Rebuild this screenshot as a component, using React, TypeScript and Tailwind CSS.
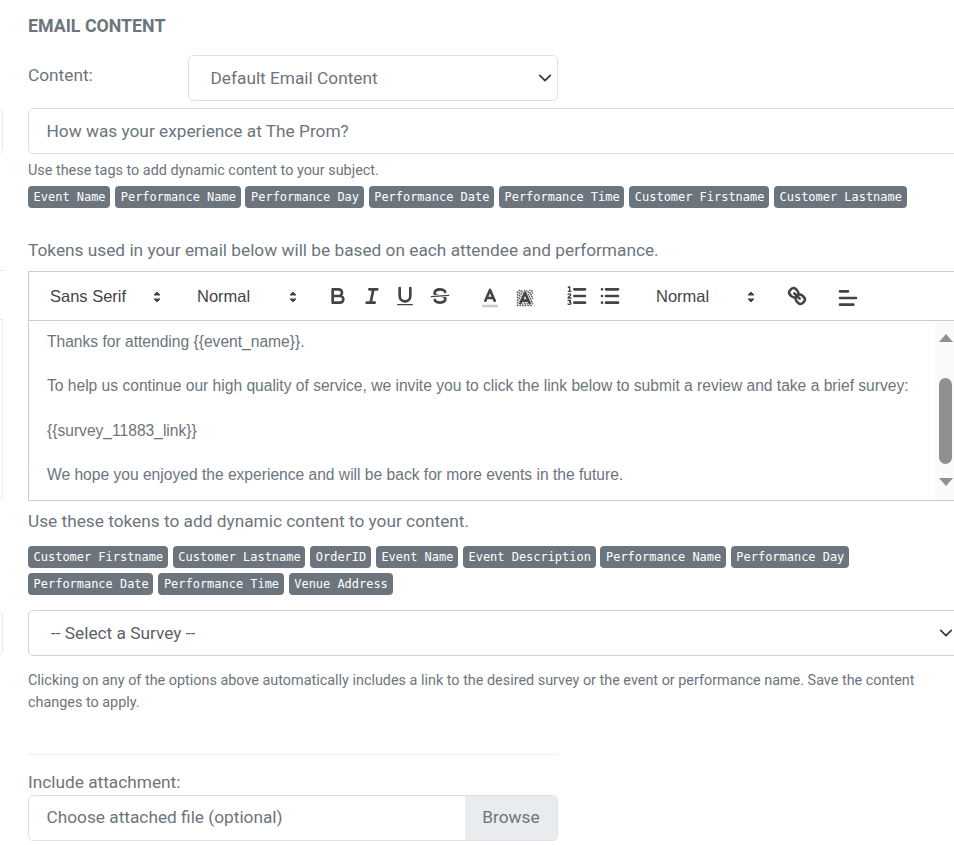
import React from "react";

const subjectTags = ["Event Name", "Performance Name", "Performance Day", "Performance Date", "Performance Time", "Customer Firstname", "Customer Lastname"];
const contentTags = ["Customer Firstname", "Customer Lastname", "OrderID", "Event Name", "Event Description", "Performance Name", "Performance Day", "Performance Date", "Performance Time", "Venue Address"];

function Tag({ label }: { label: string }) {
  return (
    <span className="h-[21.6px] pl-[5.6px] pr-[4.7px] rounded-[4px] bg-[#6c757d] text-white text-[11.96px] leading-[22.6px] whitespace-nowrap font-['DejaVu_Sans_Mono',monospace]">
      {label}
    </span>
  );
}

function Chevron({ className }: { className?: string }) {
  return (
    <svg viewBox="0 0 16 16" className={className} fill="none" stroke="#343a40" strokeWidth="2" strokeLinecap="round" strokeLinejoin="round">
      <path d="M2 5l6 6 6-6" />
    </svg>
  );
}

function Updown() {
  return (
    <svg viewBox="0 0 18 18" className="w-[18px] h-[18px] shrink-0 translate-y-[1px]" fill="#444" stroke="#444" strokeWidth="1" strokeLinejoin="round">
      <path d="M6 7l3-3 3 3z" />
      <path d="M6 11l3 3 3-3z" />
    </svg>
  );
}

function PickerLabel({ label, className }: { label: string; className: string }) {
  return <span className={`text-[16.5px] leading-none text-[#444] font-['Liberation_Sans',sans-serif] ${className}`}>{label}</span>;
}

function ToolIcon({ children, className }: { children: React.ReactNode; className?: string }) {
  return (
    <svg viewBox="0 0 18 18" className={`w-[24px] h-[24px] shrink-0 ${className ?? ""}`} fill="none" stroke="#444" strokeWidth="2" strokeLinecap="round" strokeLinejoin="round">
      {children}
    </svg>
  );
}

export default function App() {
  return (
    <div className="relative w-[954px] h-[845px] overflow-hidden bg-white text-[#6c757d] font-['Roboto',sans-serif]">
      {/* bits of the clipped column on the left */}
      <div className="absolute left-[-10px] top-[108px] w-[13px] h-[46px] border border-[#e6e8eb] rounded-[5px]" />
      <div className="absolute left-0 top-[270px] w-[3px] h-[50px] border-y border-[#e2e2e2]" />
      <div className="absolute left-[-1px] top-[320px] w-[4px] h-[180px] border-r border-b border-[#eeeeee]" />
      <div className="absolute left-[-10px] top-[610px] w-[13px] h-[46px] border border-[#e6e8eb] rounded-[5px]" />

      <div className="w-[1000px] pl-[28px] pt-[16px]">
        <h3 className="text-[17.8px] leading-[20px] font-bold text-[#6c757d]">EMAIL CONTENT</h3>

        <div className="flex mt-[19px] w-[530px]">
          <label className="w-[160px] text-[17.28px] leading-[24px] pt-[8px]">Content:</label>
          <div className="flex-1 h-[46px] border border-[#dee2e6] rounded-[5px] flex items-center justify-between pl-[21.5px] pr-[5px] text-[17.28px]">
            <span className="translate-y-[1px]">Default Email Content</span>
            <Chevron className="w-[14px] h-[14px]" />
          </div>
        </div>

        <div className="mt-[7px] h-[46px] border border-[#dee2e6] rounded-[5px] flex items-center pl-[17.5px] text-[17.28px]">
          <span className="translate-y-[1px]">How was your experience at The Prom?</span>
        </div>

        <p className="mt-[7px] text-[14.4px] leading-[20px]">Use these tags to add dynamic content to your subject.</p>
        <div className="flex gap-[4.9px] mt-[5px]">
          {subjectTags.map(t => <Tag key={t} label={t} />)}
        </div>

        <p className="mt-[30.4px] text-[17.28px] leading-[24px]">Tokens used in your email below will be based on each attendee and performance.</p>

        <div className="mt-[9px] border border-[#ccc] h-[230px] flex flex-col">
          <div className="h-[49px] border-b border-[#ccc] flex items-center shrink-0">
            <PickerLabel label="Sans Serif" className="ml-[21px] w-[97.5px]" />
            <Updown />
            <PickerLabel label="Normal" className="ml-[31.5px] w-[87px]" />
            <Updown />
            <ToolIcon className="ml-[24px]">
              <path d="M5 4h4.500a2.500 2.500 0 010 5H5zM5 9h5.500a2.500 2.500 0 010 5H5z" />
            </ToolIcon>
            <ToolIcon className="ml-[10px]">
              <path d="M7 4h6M5 14h6M8 14l2-10" />
            </ToolIcon>
            <ToolIcon className="ml-[9px]">
              <path d="M5 3v6a4 4 0 004 4 4 4 0 004-4V3" />
              <rect x="3" y="15" width="12" height="1" rx=".5" fill="#444" stroke="none" />
            </ToolIcon>
            <ToolIcon className="ml-[11px]">
              <path d="M15.500 8.500l-13 1" strokeWidth="1" />
              <path fill="#444" stroke="none" d="M9.007 8C6.542 7.791 6 7.519 6 6.500 6 5.792 7.283 5 9 5c1.571 0 2.765.679 2.969 1.309a1 1 0 001.900-.617C13.356 4.106 11.354 3 9 3 6.200 3 4 4.538 4 6.500a3.200 3.200 0 00.500 1.843z" />
              <path fill="#444" stroke="none" d="M8.984 10C11.457 10.208 12 10.479 12 11.500c0 .708-1.283 1.500-3 1.500-1.571 0-2.765-.679-2.969-1.309a1 1 0 10-1.900.617C4.644 13.894 6.646 15 9 15c2.800 0 5-1.538 5-3.500a3.200 3.200 0 00-.500-1.843z" />
            </ToolIcon>
            <ToolIcon className="ml-[26px] translate-y-[2px]">
              <path d="M3 15h12" stroke="#ccc" strokeLinecap="butt" />
              <path d="M5.500 11L9 3l3.500 8M11.630 9H6.380" />
            </ToolIcon>
            <ToolIcon className="ml-[11px] translate-y-[2px]">
              <path d="M3 5l2-2M3 7l4-4M3 9l6-6M3 11l8-8M3 13L13 3M3 15L15 3M5 15L15 5M7 15l8-8M9 15l6-6M11 15l4-4M13 15l2-2" stroke="#555" strokeWidth="1.100" strokeLinecap="butt" strokeDasharray="1.200 .7" />
              <path d="M5.500 13L9 5l3.500 8M11.630 11H6.380" stroke="#fff" strokeWidth="2.800" />
              <path d="M5.500 13L9 5l3.500 8M11.630 11H6.380" />
            </ToolIcon>
            <ToolIcon className="ml-[27.5px]">
              <path d="M7 4h8M7 9h8M7 14h8" />
              <path d="M2.500 2.500l1-.5v3.500M2.500 5.500h2M2.300 7.800c.5-.6 2-.6 2 .4 0 .8-2 1-2 2.300h2.200M2.300 12.300h2l-1 1.200c1 0 1.200.5 1.200 1 0 1-1.700 1-2.200.5" strokeWidth="1" />
            </ToolIcon>
            <ToolIcon className="ml-[9.5px]">
              <path d="M6 4h9M6 9h9M6 14h9M3 4h0M3 9h0M3 14h0" />
            </ToolIcon>
            <PickerLabel label="Normal" className="ml-[34px] w-[85.5px]" />
            <Updown />
            <ToolIcon className="ml-[25.5px]">
              <path d="M7 7l4 4" />
              <path d="M8.900 4.577a3.476 3.476 0 01.360 4.679A3.476 3.476 0 014.577 8.900C3.185 7.500 2.035 6.400 4.217 4.217S7.500 3.185 8.900 4.577z" />
              <path d="M13.423 9.100a3.476 3.476 0 00-4.679-.360 3.476 3.476 0 00.360 4.679c1.392 1.392 2.500 2.542 4.679.360s1.032-3.287-.360-4.679z" />
            </ToolIcon>
            <ToolIcon className="ml-[27px] translate-y-[2px]">
              <path d="M3 9h12M3 14h10M3 4h6" />
            </ToolIcon>
          </div>
          <div className="flex-1 flex min-h-0">
            <div className="w-[906px] shrink-0 pl-[18px] pt-[9px] text-[15.6px] leading-[24px] font-['Liberation_Sans',sans-serif] whitespace-nowrap">
              <p className="h-[44.3px]">Thanks for attending {"{{event_name}}"}.</p>
              <p className="h-[44.3px]">To help us continue our high quality of service, we invite you to click the link below to submit a review and take a brief survey:</p>
              <p className="h-[44.3px]">{"{{survey_11883_link}}"}</p>
              <p>We hope you enjoyed the experience and will be back for more events in the future.</p>
            </div>
            <div className="w-[21px] shrink-0 bg-[#fafafa] flex flex-col items-center">
              <div className="mt-[13px] w-0 h-0 border-x-[7.5px] border-x-transparent border-b-[8px] border-b-[#909090]" />
              <div className="mt-[36px] w-[13px] h-[86px] rounded-full bg-[#8f8f8f]" />
              <div className="mt-[14px] w-0 h-0 border-x-[7.5px] border-x-transparent border-t-[8px] border-t-[#909090]" />
            </div>
          </div>
        </div>

        <p className="mt-[8px] text-[17.28px] leading-[24px]">Use these tokens to add dynamic content to your content.</p>
        <div className="flex flex-wrap gap-x-[4.9px] gap-y-[5.4px] mt-[13px] w-[850px]">
          {contentTags.map(t => <Tag key={t} label={t} />)}
        </div>

        <div className="mt-[15.4px] h-[46px] border border-[#ced4da] rounded-[5px] flex items-center justify-between pl-[22px] pr-[46px] text-[17.28px] text-[#5a6268]">
          <span className="translate-y-[1px]">-- Select a Survey --</span>
          <Chevron className="w-[14px] h-[14px]" />
        </div>

        <p className="mt-[14px] w-[900px] text-[14.4px] leading-[22px]">
          Clicking on any of the options above automatically includes a link to the desired survey or the event or performance name. Save the content changes to apply.
        </p>

        <div className="mt-[40px] w-[530px] border-t border-[#eef0f3]" />

        <label className="block mt-[17px] text-[17.28px] leading-[20px]">Include attachment:</label>
        <div className="mt-[3px] w-[530px] h-[46px] border border-[#dee2e6] rounded-[5px] flex items-center overflow-hidden text-[17.28px]">
          <span className="flex-1 pl-[17.5px]">Choose attached file (optional)</span>
          <span className="w-[92px] h-full bg-[#e9ecef] flex items-center justify-center">Browse</span>
        </div>
      </div>
    </div>
  );
}
